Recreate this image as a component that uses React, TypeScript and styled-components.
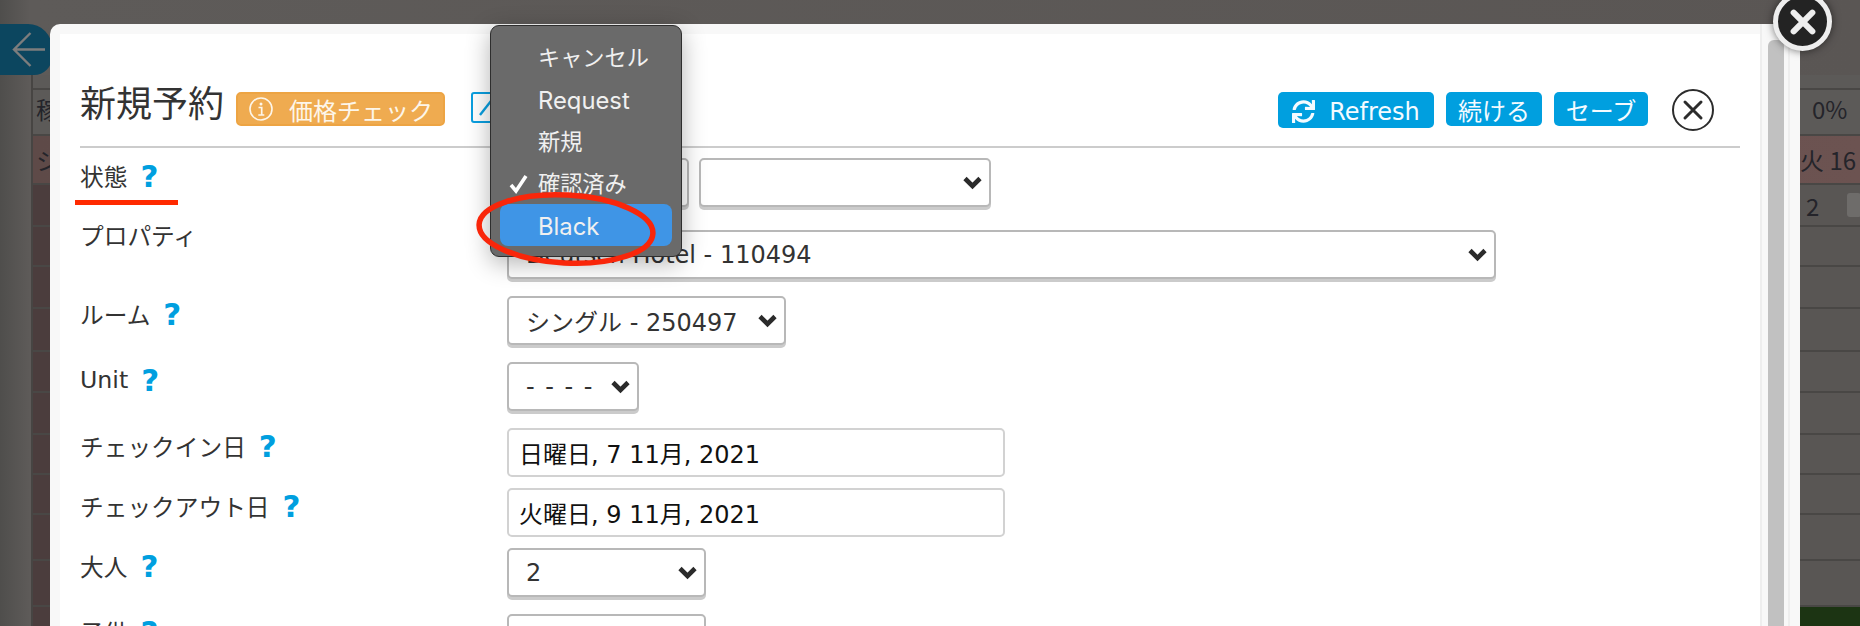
import React from "react"
import styled, { createGlobalStyle } from "styled-components"
import { FaSync } from "react-icons/fa"

const GlobalStyle = createGlobalStyle`
  html, body {
    margin: 0;
    padding: 0;
    overflow: hidden;
    font-family: "DejaVu Sans", "Noto Sans CJK JP", sans-serif;
  }
  * { box-sizing: border-box; }
`

const Page = styled.div`
  position: relative;
  width: 1860px;
  height: 626px;
  overflow: hidden;
  background: linear-gradient(90deg, #4f4e4c 0, #5e5b59 30px, #5a5654 100%);
`

/* page behind the modal */
const BackHeader = styled.div`
  height: 75px;
  padding-top: 24px;
`

const BackTab = styled.div`
  width: 52px;
  height: 51px;
  display: flex;
  align-items: center;
  padding-left: 12px;
  background: #0c465f;
  border-radius: 0 24px 18px 0;
`

const BackTable = styled.div`
  margin-left: 31px;
  border-left: 2px solid #474543;
`

const BackRow = styled.div<{ $height: number; $tone?: "first" | "red" | "green"; $lift?: boolean }>`
  height: ${({ $height }) => $height}px;
  display: flex;
  justify-content: space-between;
  align-items: center;
  padding-bottom: ${({ $lift }) => ($lift ? 8 : 0)}px;
  font-size: 24px;
  font-family: "Noto Sans CJK JP", sans-serif;
  color: #24242a;
  border-bottom: 2px solid #494745;
  background: ${({ $tone }) => {
    if ($tone === "first") return "linear-gradient(90deg, #5e4a48 0, #6c5351 100%)"
    if ($tone === "green") return "linear-gradient(90deg, #4b3d3d 0, #4b3d3d 1700px, #1c3413 1700px)"
    if ($tone === "red") return "linear-gradient(90deg, #4b3d3d 0, #4b3d3d 20px, #595654 1700px)"
    return "#5c5a58"
  }};
`

const BackLeftCell = styled.span`
  padding-left: 3px;
`

const BackRightCell = styled.span<{ $left: number }>`
  width: 60px;
  padding-left: ${({ $left }) => $left}px;
  white-space: nowrap;
  display: flex;
  align-items: center;
  gap: 28px;
`

const BackThumb = styled.span`
  width: 14px;
  height: 24px;
  flex: none;
  background: #6e6c6a;
  border-radius: 3px;
`

/* modal */
const Modal = styled.div`
  position: absolute;
  left: 50px;
  top: 24px;
  width: 1750px;
  height: 640px;
  display: flex;
  padding: 10px 0 0 10px;
  background: #f8f8f8;
  border-radius: 10px 0 0 0;
`

const Content = styled.div`
  width: 1700px;
  background: #fff;
  padding: 55px 20px 0;
`

const Track = styled.div`
  width: 30px;
  margin-top: -10px;
  padding: 16px 4px 0 6px;
  border-left: 2px solid #eeeeee;
  border-right: 2px solid #eeeeee;
`

const Thumb = styled.div`
  width: 16px;
  height: 100%;
  background: #c1c1c1;
  border-radius: 6px 6px 0 0;
`

const HeaderBar = styled.div`
  height: 59px;
  display: flex;
  justify-content: space-between;
  border-bottom: 2px solid #cccccc;
  padding-right: 26px;
`

const HeaderSide = styled.div`
  display: flex;
  align-items: flex-start;
`

const Title = styled.h1`
  margin: -9px 14px 0 0;
  width: 142px;
  font-size: 36px;
  line-height: 50px;
  font-weight: 400;
  color: #333;
  white-space: nowrap;
`

const PriceBadge = styled.div`
  margin-top: 3px;
  width: 209px;
  height: 34px;
  display: flex;
  align-items: center;
  gap: 16px;
  padding-left: 11px;
  font-size: 24px;
  color: #fdf6ea;
  background: #efab50;
  border: 2px solid #eda443;
  border-radius: 5px;
`

const OutlineButton = styled.div`
  margin: 3px 0 0 26px;
  width: 44px;
  height: 31px;
  padding: 3px 0 0 6px;
  border: 2px solid #0a9fe0;
  border-radius: 3px;
`

const ActionButton = styled.div<{ $width: number; $tall?: boolean }>`
  margin: 3px 12px 0 0;
  width: ${({ $width }) => $width}px;
  height: ${({ $tall }) => ($tall ? 36 : 34)}px;
  display: flex;
  align-items: center;
  justify-content: center;
  gap: 14px;
  padding-top: ${({ $tall }) => ($tall ? 3 : 0)}px;
  font-size: 24px;
  color: #f4fbff;
  background: #009fdf;
  border-radius: 5px;
`

const CircleClose = styled.div`
  margin-left: 12px;
  width: 42px;
  height: 42px;
  display: flex;
  align-items: center;
  justify-content: center;
  border: 2px solid #2c2c2c;
  border-radius: 50%;
`

const Form = styled.div`
  padding-top: 10px;
`

const FormRow = styled.div<{ $height: number }>`
  height: ${({ $height }) => $height}px;
  display: grid;
  grid-template-columns: 427px 1fr;
`

const Label = styled.div<{ $top: number }>`
  position: relative;
  display: flex;
  align-items: center;
  height: 36px;
  gap: 13px;
  margin-top: ${({ $top }) => $top}px;
  font-size: 23.7px;
  color: #333;
`

const Help = styled.span`
  font-size: 31px;
  font-weight: 700;
  color: #009fdf;
`

const RedUnderline = styled.span`
  position: absolute;
  left: -5px;
  top: 42px;
  width: 103px;
  height: 5px;
  background: #ff2a00;
`

const Controls = styled.div`
  display: flex;
  align-items: flex-start;
  gap: 10px;
`

const SelectBox = styled.div<{ $width: number }>`
  width: ${({ $width }) => $width}px;
  height: 49px;
  display: flex;
  align-items: center;
  justify-content: space-between;
  padding: 0 6px 0 17px;
  font-size: 24px;
  color: #333;
  background: #fff;
  border: 2px solid #b8b8b8;
  border-radius: 5px;
  box-shadow: 0 3px 0 #cbcbcb;
  white-space: nowrap;
`

const Dashes = styled.span`
  word-spacing: 3px;
`

const DateInput = styled.div`
  width: 498px;
  height: 49px;
  display: flex;
  align-items: center;
  padding-left: 10px;
  font-size: 24px;
  color: #111;
  background: #fff;
  border: 2px solid #d2d2d2;
  border-radius: 5px;
`

/* native-looking status menu lying over the form */
const Popover = styled.div`
  position: absolute;
  left: 490px;
  top: 25px;
  width: 192px;
  height: 232px;
  padding: 10px 9px;
  background: #6a6a6a;
  border: 1px solid #2e2e2e;
  border-radius: 9px;
  box-shadow: 0 6px 24px rgba(0, 0, 0, 0.3);
`

const MenuItem = styled.div<{ $active?: boolean; $latin?: boolean }>`
  position: relative;
  height: 42px;
  display: flex;
  align-items: center;
  padding: ${({ $latin }) => ($latin ? "2px 0 0 38px" : "0 0 2px 38px")};
  font-family: Inter, "Noto Sans CJK JP", sans-serif;
  font-size: ${({ $latin }) => ($latin ? 23.8 : 22.2)}px;
  color: #f0f0f0;
  border-radius: 8px;
  background: ${({ $active }) => ($active ? "#3f95e6" : "transparent")};
`

const Check = styled.svg`
  position: absolute;
  left: 9px;
  top: 12px;
`

const RedEllipse = styled.svg`
  position: absolute;
  left: 475px;
  top: 190px;
`

const TopClose = styled.div`
  position: absolute;
  left: 1773px;
  top: -8px;
  width: 59px;
  height: 59px;
  display: flex;
  align-items: center;
  justify-content: center;
  background: #232323;
  border: 5px solid #eeeeee;
  border-radius: 50%;
  box-shadow: 0 0 8px rgba(0, 0, 0, 0.55);
`

const Chevron = () => (
  <svg width="21" height="15" viewBox="0 0 21 15">
    <polyline points="3,3.5 10.5,11 18,3.5" fill="none" stroke="#2b2b2b" strokeWidth="4.6" />
  </svg>
)

const CrossIcon = ({ size, width, color }: { size: number; width: number; color: string }) => (
  <svg width={size} height={size} viewBox="0 0 24 24">
    <path d="M4 4 L20 20 M20 4 L4 20" stroke={color} strokeWidth={width} strokeLinecap="round" />
  </svg>
)

const InfoIcon = () => (
  <svg width="24" height="24" viewBox="0 0 24 24" fill="none" stroke="#fdf6ea">
    <circle cx="12" cy="12" r="11" strokeWidth="1.6" />
    <circle cx="12" cy="7" r="1.5" fill="#fdf6ea" stroke="none" />
    <path d="M9.5 10.5h3.2v7.2M9.3 18h6" strokeWidth="1.7" />
  </svg>
)

type BackRowData = {
  height: number
  tone?: "first" | "red" | "green"
  left?: string
  right?: React.ReactNode
  rightLeft?: number
  lift?: boolean
}

const rows: BackRowData[] = [
  { height: 15 },
  { height: 46, left: "稼", right: "0%", rightLeft: 12, lift: true },
  { height: 49, tone: "first", left: "シ", right: "火 16", rightLeft: 0 },
  { height: 42, tone: "red", right: <>2<BackThumb /></>, rightLeft: 6 },
  { height: 40, tone: "red" },
  { height: 42, tone: "red" },
  { height: 43, tone: "red" },
  { height: 41, tone: "red" },
  { height: 42, tone: "red" },
  { height: 40, tone: "red" },
  { height: 40, tone: "red" },
  { height: 46, tone: "red" },
  { height: 46, tone: "red" },
  { height: 30, tone: "green" },
]

const menuItems = ["キャンセル", "Request", "新規", "確認済み", "Black"]

const App = () => {
  return (
    <Page>
      <GlobalStyle />
      <BackHeader>
        <BackTab>
          <svg width="33" height="35" viewBox="0 0 33 35" fill="none" stroke="#7d7d7d" strokeWidth="2.4">
            <path d="M33 17.5H2M18.5 1 2 17.5 18.5 34" />
          </svg>
        </BackTab>
      </BackHeader>
      <BackTable>
        {rows.map((row, i) => (
          <BackRow key={i} $height={row.height} $tone={row.tone} $lift={row.lift}>
            <BackLeftCell>{row.left}</BackLeftCell>
            <BackRightCell $left={row.rightLeft ?? 0}>{row.right}</BackRightCell>
          </BackRow>
        ))}
      </BackTable>

      <Modal>
        <Content>
          <HeaderBar>
            <HeaderSide>
              <Title>新規予約</Title>
              <PriceBadge>
                <InfoIcon />
                価格チェック
              </PriceBadge>
              <OutlineButton>
                <svg width="20" height="20" viewBox="0 0 20 20">
                  <path d="M1 18 12 4" stroke="#0a9fe0" strokeWidth="2.4" />
                </svg>
              </OutlineButton>
            </HeaderSide>
            <HeaderSide>
              <ActionButton $width={156} $tall>
                <FaSync size={23} />
                Refresh
              </ActionButton>
              <ActionButton $width={96}>続ける</ActionButton>
              <ActionButton $width={94}>セーブ</ActionButton>
              <CircleClose>
                <CrossIcon size={24} width={3} color="#2c2c2c" />
              </CircleClose>
            </HeaderSide>
          </HeaderBar>
          <Form>
            <FormRow $height={72}>
              <Label $top={0}>
                状態 <Help>?</Help>
                <RedUnderline />
              </Label>
              <Controls>
                <SelectBox $width={182} />
                <SelectBox $width={292}>
                  <span />
                  <Chevron />
                </SelectBox>
              </Controls>
            </FormRow>
            <FormRow $height={66}>
              <Label $top={-13}>プロパティ</Label>
              <Controls>
                <SelectBox $width={989}>
                  Deutsch Hotel - 110494
                  <Chevron />
                </SelectBox>
              </Controls>
            </FormRow>
            <FormRow $height={66}>
              <Label $top={0}>
                ルーム <Help>?</Help>
              </Label>
              <Controls>
                <SelectBox $width={279}>
                  シングル - 250497
                  <Chevron />
                </SelectBox>
              </Controls>
            </FormRow>
            <FormRow $height={66}>
              <Label $top={0}>
                Unit <Help>?</Help>
              </Label>
              <Controls>
                <SelectBox $width={132}>
                  <Dashes>- - - -</Dashes>
                  <Chevron />
                </SelectBox>
              </Controls>
            </FormRow>
            <FormRow $height={60}>
              <Label $top={0}>
                チェックイン日 <Help>?</Help>
              </Label>
              <Controls>
                <DateInput>日曜日, 7 11月, 2021</DateInput>
              </Controls>
            </FormRow>
            <FormRow $height={60}>
              <Label $top={0}>
                チェックアウト日 <Help>?</Help>
              </Label>
              <Controls>
                <DateInput>火曜日, 9 11月, 2021</DateInput>
              </Controls>
            </FormRow>
            <FormRow $height={66}>
              <Label $top={0}>
                大人 <Help>?</Help>
              </Label>
              <Controls>
                <SelectBox $width={199}>
                  2
                  <Chevron />
                </SelectBox>
              </Controls>
            </FormRow>
            <FormRow $height={50}>
              <Label $top={0}>
                子供 <Help>?</Help>
              </Label>
              <Controls>
                <SelectBox $width={199} />
              </Controls>
            </FormRow>
          </Form>
        </Content>
        <Track>
          <Thumb />
        </Track>
      </Modal>

      <Popover>
        {menuItems.map((item) => (
          <MenuItem key={item} $active={item === "Black"} $latin={/^[A-Za-z]+$/.test(item)}>
            {item === "確認済み" && (
              <Check width="20" height="20" viewBox="0 0 20 20">
                <path d="M2 11l5 6L17 2" fill="none" stroke="#fff" strokeWidth="3.6" />
              </Check>
            )}
            {item}
          </MenuItem>
        ))}
      </Popover>

      <RedEllipse width="182" height="78" viewBox="0 0 182 78">
        <ellipse cx="91" cy="39" rx="87" ry="34" fill="none" stroke="#f9260a" strokeWidth="5.5" transform="rotate(3 91 39)" />
      </RedEllipse>

      <TopClose>
        <CrossIcon size={28} width={5.2} color="#eeeeee" />
      </TopClose>
    </Page>
  )
}

export default App
